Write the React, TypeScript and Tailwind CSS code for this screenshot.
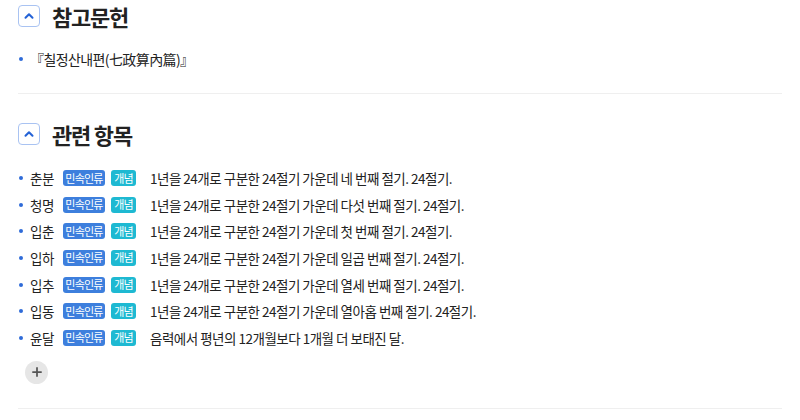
import { ChevronUp, Plus } from 'lucide-react';

const related = [
  { name: '춘분', desc: '1년을 24개로 구분한 24절기 가운데 네 번째 절기. 24절기.' },
  { name: '청명', desc: '1년을 24개로 구분한 24절기 가운데 다섯 번째 절기. 24절기.' },
  { name: '입춘', desc: '1년을 24개로 구분한 24절기 가운데 첫 번째 절기. 24절기.' },
  { name: '입하', desc: '1년을 24개로 구분한 24절기 가운데 일곱 번째 절기. 24절기.' },
  { name: '입추', desc: '1년을 24개로 구분한 24절기 가운데 열세 번째 절기. 24절기.' },
  { name: '입동', desc: '1년을 24개로 구분한 24절기 가운데 열아홉 번째 절기. 24절기.' },
  { name: '윤달', desc: '음력에서 평년의 12개월보다 1개월 더 보태진 달.' },
];

function SectionHeader({ title }: { title: string }) {
  return (
    <div className="flex items-center gap-3">
      <button className="flex h-[22px] w-[22px] items-center justify-center rounded-[4px] border border-[#a9c3f2] bg-white">
        <ChevronUp className="h-3.5 w-3.5 text-[#2563d6]" strokeWidth={3.5} />
      </button>
      <h2 className="text-[22px] font-bold leading-none tracking-[-1.2px] text-[#222]">{title}</h2>
    </div>
  );
}

export default function App() {
  return (
    <div
      className="h-[420px] w-[800px] bg-white px-[18px] text-[#222]"
      style={{ fontFamily: '"Noto Sans CJK KR", "Noto Sans", sans-serif' }}
    >
      {/* 참고문헌 */}
      <section className="border-b border-[#efefef] pb-[24px] pt-[5px]">
        <SectionHeader title="참고문헌" />
        <ul className="mt-[22px]">
          <li className="flex items-center gap-[7px] text-[14px] leading-[20px] tracking-[-0.6px]">
            <span className="ml-[1px] h-[4px] w-[4px] rounded-full bg-[#2f6bd8]" />
            『칠정산내편(七政算內篇)』
          </li>
        </ul>
      </section>

      {/* 관련 항목 */}
      <section className="border-b border-[#efefef] pb-[24px] pt-[29px]">
        <SectionHeader title="관련 항목" />
        <ul className="mt-[23px] flex flex-col gap-[6.67px]">
          {related.map((item) => (
            <li key={item.name} className="flex h-[20px] items-center text-[13.5px] leading-[20px] tracking-[-0.5px]">
              <span className="ml-[1px] h-[4px] w-[4px] rounded-full bg-[#2f6bd8]" />
              <span className="ml-[7px] w-[33px] text-[#222]">{item.name}</span>
              <span className="flex h-[16px] w-[42px] items-center justify-center rounded-[3px] bg-[#3d7fdd] text-[11px] leading-none tracking-[-0.8px] text-white">
                민속인류
              </span>
              <span className="ml-[6px] flex h-[16px] w-[25px] items-center justify-center rounded-[3px] bg-[#1eb9d2] text-[11px] leading-none tracking-[-0.8px] text-white">
                개념
              </span>
              <span className="ml-[14px] text-[#222]">{item.desc}</span>
            </li>
          ))}
        </ul>
        <button className="ml-[7px] mt-[13px] flex h-[23px] w-[23px] items-center justify-center rounded-full bg-[#e6e6e6]">
          <Plus className="h-3.5 w-3.5 text-[#555]" strokeWidth={3} />
        </button>
      </section>
    </div>
  );
}
